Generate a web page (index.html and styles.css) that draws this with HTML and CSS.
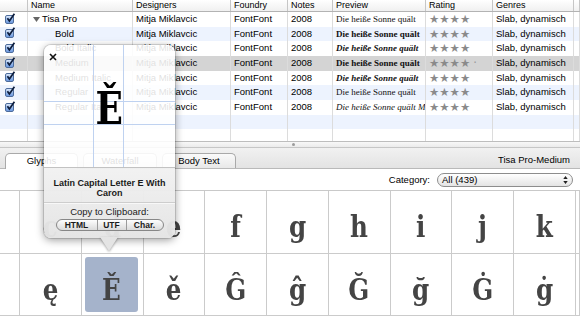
FILE: index.html
```html
<!DOCTYPE html>
<html lang="de">
<head>
  <meta charset="UTF-8">
  <title>Font Book - Tisa Pro</title>
  <link rel="stylesheet" href="styles.css">
</head>
<body>
<div class="window">

  <div class="font-table">
    <div class="row head">
      <div></div><div>Name</div><div>Designers</div><div>Foundry</div><div>Notes</div><div>Preview</div><div>Rating</div><div>Genres</div><div></div>
    </div>
    <div class="row">
      <div class="chk"><span class="check"><svg viewBox="0 0 11 11"><path d="M2.4 5.2 L4.4 8 L9.4 0.8"/></svg></span></div>
      <div class="name family"><svg class="disclosure" viewBox="0 0 7 5"><path d="M0 0 H7 L3.5 5 Z"/></svg>Tisa Pro</div>
      <div>Mitja Miklavcic</div><div>FontFont</div><div>2008</div>
      <div class="preview">Die heiße Sonne quält</div>
      <div class="stars">★★★★</div>
      <div>Slab, dynamisch</div><div></div>
    </div>
    <div class="row alt">
      <div class="chk"><span class="check"><svg viewBox="0 0 11 11"><path d="M2.4 5.2 L4.4 8 L9.4 0.8"/></svg></span></div>
      <div class="name">Bold</div>
      <div>Mitja Miklavcic</div><div>FontFont</div><div>2008</div>
      <div class="preview bold">Die heiße Sonne quält</div>
      <div class="stars">★★★★</div>
      <div>Slab, dynamisch</div><div></div>
    </div>
    <div class="row">
      <div class="chk"><span class="check"><svg viewBox="0 0 11 11"><path d="M2.4 5.2 L4.4 8 L9.4 0.8"/></svg></span></div>
      <div class="name">Bold Italic</div>
      <div>Mitja Miklavcic</div><div>FontFont</div><div>2008</div>
      <div class="preview bold italic">Die heiße Sonne quält</div>
      <div class="stars">★★★★</div>
      <div>Slab, dynamisch</div><div></div>
    </div>
    <div class="row sel">
      <div class="chk"><span class="check"><svg viewBox="0 0 11 11"><path d="M2.4 5.2 L4.4 8 L9.4 0.8"/></svg></span></div>
      <div class="name">Medium</div>
      <div>Mitja Miklavcic</div><div>FontFont</div><div>2008</div>
      <div class="preview bold">Die heiße Sonne quält</div>
      <div class="stars">★★★★<span class="empty-star">·</span></div>
      <div>Slab, dynamisch</div><div></div>
    </div>
    <div class="row">
      <div class="chk"><span class="check"><svg viewBox="0 0 11 11"><path d="M2.4 5.2 L4.4 8 L9.4 0.8"/></svg></span></div>
      <div class="name">Medium Italic</div>
      <div>Mitja Miklavcic</div><div>FontFont</div><div>2008</div>
      <div class="preview semibold italic">Die heiße Sonne quält</div>
      <div class="stars">★★★★</div>
      <div>Slab, dynamisch</div><div></div>
    </div>
    <div class="row alt">
      <div class="chk"><span class="check"><svg viewBox="0 0 11 11"><path d="M2.4 5.2 L4.4 8 L9.4 0.8"/></svg></span></div>
      <div class="name">Regular</div>
      <div>Mitja Miklavcic</div><div>FontFont</div><div>2008</div>
      <div class="preview">Die heiße Sonne quält</div>
      <div class="stars">★★★★</div>
      <div>Slab, dynamisch</div><div></div>
    </div>
    <div class="row">
      <div class="chk"><span class="check"><svg viewBox="0 0 11 11"><path d="M2.4 5.2 L4.4 8 L9.4 0.8"/></svg></span></div>
      <div class="name">Regular Italic</div>
      <div>Mitja Miklavcic</div><div>FontFont</div><div>2008</div>
      <div class="preview italic">Die heiße Sonne quält Max</div>
      <div class="stars">★★★★</div>
      <div>Slab, dynamisch</div><div></div>
    </div>
    <div class="row alt">
      <div></div><div></div><div></div><div></div><div></div><div></div><div></div><div></div><div></div>
    </div>
    <div class="row filler">
      <div></div><div></div><div></div><div></div><div></div><div></div><div></div><div></div><div></div>
    </div>
  </div>

  <div class="splitter"><span class="grip"></span></div>

  <div class="tabbar">
    <div class="tabs">
      <div class="tab active">Glyphs</div>
      <div class="tab">Waterfall</div>
      <div class="tab">Body Text</div>
    </div>
    <div class="font-name">Tisa Pro-Medium</div>
  </div>

  <div class="toolbar">
    <label>Category:</label>
    <div class="popup">
      <span>All (439)</span>
      <svg class="updown" viewBox="0 0 5 9"><path d="M2.5 0 L5 3.3 H0 Z M2.5 9 L5 5.7 H0 Z"/></svg>
    </div>
  </div>

  <div class="glyphs">
    <div class="glyph"></div>
    <div class="glyph"><span>c</span></div>
    <div class="glyph"><span>d</span></div>
    <div class="glyph"><span>e</span></div>
    <div class="glyph"><span>f</span></div>
    <div class="glyph"><span>g</span></div>
    <div class="glyph"><span>h</span></div>
    <div class="glyph"><span>i</span></div>
    <div class="glyph"><span>j</span></div>
    <div class="glyph"><span>k</span></div>
    <div class="glyph"></div>

    <div class="glyph"></div>
    <div class="glyph"><span>ę</span></div>
    <div class="glyph sel"><div class="pick"><span>Ě</span></div></div>
    <div class="glyph"><span>ě</span></div>
    <div class="glyph"><span>Ĝ</span></div>
    <div class="glyph"><span>ĝ</span></div>
    <div class="glyph"><span>Ğ</span></div>
    <div class="glyph"><span>ğ</span></div>
    <div class="glyph"><span>Ġ</span></div>
    <div class="glyph"><span>ġ</span></div>
    <div class="glyph"></div>
  </div>

  <div class="popover">
    <div class="glyph-view">
      <span class="guide-v left"></span>
      <span class="guide-v right"></span>
      <span class="guide-h xheight"></span>
      <span class="guide-h baseline"></span>
      <svg class="close" viewBox="0 0 8 8"><path d="M1 1 L7 7 M7 1 L1 7"/></svg>
      <span class="big-glyph">Ě</span>
    </div>
    <div class="glyph-info">
      <div class="glyph-title">Latin Capital Letter E With Caron</div>
      <div class="copy-label">Copy to Clipboard:</div>
      <div class="segmented">
        <span class="seg-html">HTML</span><span class="seg-utf">UTF</span><span class="seg-char">Char.</span>
      </div>
    </div>
    <svg class="popover-tip" viewBox="0 0 18 15"><path d="M0 0 H18 L9 14 Z"/></svg>
  </div>

</div>
</body>
</html>
```

FILE: styles.css
```css
* { box-sizing: border-box; }
body {
  margin: 0;
  font-family: "Liberation Sans", Arial, sans-serif;
  font-size: 9.5px;
  color: #000;
  background: #fff;
}
.window {
  position: relative;
  width: 580px;
  height: 316px;
  overflow: hidden;
  display: flex;
  flex-direction: column;
}

/* font list */
.font-table {
  height: 141px;
  display: flex;
  flex-direction: column;
  flex-shrink: 0;
}
.row {
  display: grid;
  grid-template-columns: 28px 105px 98px 57px 45px 93px 67px 81px 1fr;
  height: 14.67px;
  line-height: 14.67px;
  flex-shrink: 0;
}
.row > div {
  border-right: 1px solid #dcdcdc;
  padding-left: 3px;
  white-space: nowrap;
  overflow: hidden;
}
.row.head {
  height: 12px;
  line-height: 11px;
  font-size: 9px;
  background: linear-gradient(#fff, #f0f0f0);
  border-bottom: 1px solid #b3b3b3;
}
.row.head > div { border-right-color: #c6c6c6; }
.row.alt { background: #edf3fe; }
.row.sel { background: #d4d4d4; }
.row.filler { flex: 1; }

.row .chk {
  padding-left: 5px;
  display: flex;
  align-items: center;
  overflow: visible;
}
.check {
  position: relative;
  width: 9px;
  height: 9px;
  border: 1px solid #4d6c9c;
  border-radius: 2px;
  background: linear-gradient(#dce8fa, #8db2e8 60%, #6f9ae0);
}
.check svg {
  position: absolute;
  left: -1px;
  top: -3px;
  width: 11px;
  height: 11px;
  fill: none;
  stroke: #0d1d3c;
  stroke-width: 1.7;
}
.row .name { padding-left: 27px; }
.row .name.family {
  padding-left: 5px;
  display: flex;
  align-items: center;
}
.disclosure {
  width: 7px;
  height: 5px;
  margin-right: 2px;
  fill: #666;
}
.preview {
  font-family: "Liberation Serif", "Times New Roman", serif;
  font-size: 9px;
  color: #111;
}
.preview.bold { font-weight: bold; }
.preview.semibold { font-weight: 600; }
.preview.italic { font-style: italic; }
.stars {
  font-family: "DejaVu Sans", sans-serif;
  font-size: 11.5px;
  color: #8a8a8a;
}
.empty-star {
  margin-left: 3px;
  color: #9a9a9a;
}

/* splitter */
.splitter {
  height: 7px;
  flex-shrink: 0;
  border-top: 1px solid #bdbdbd;
  border-bottom: 1px solid #c6c6c6;
  background: linear-gradient(#f8f8f8, #ebebeb);
  display: flex;
  justify-content: center;
  align-items: center;
  padding-left: 6px;
}
.grip {
  width: 3px;
  height: 3px;
  border-radius: 50%;
  background: #9c9c9c;
}

/* tabs */
.tabbar {
  height: 21px;
  flex-shrink: 0;
  display: flex;
  justify-content: space-between;
  align-items: flex-end;
  padding: 0 10px 0 5px;
  background: linear-gradient(#f1f1f1, #e3e3e3);
  border-bottom: 1px solid #b9b9b9;
}
.tabs {
  display: flex;
  gap: 5px;
}
.tab {
  width: 74px;
  height: 15px;
  margin-bottom: -1px;
  border: 1px solid #a9a9a9;
  border-bottom: none;
  border-radius: 5px 5px 0 0;
  background: linear-gradient(#fafafa, #e8e8e8);
  text-align: center;
  line-height: 14px;
}
.tab.active {
  width: 73px;
  height: 16px;
  background: #fff;
}
.font-name {
  align-self: center;
  padding-top: 3px;
}

/* category bar */
.toolbar {
  height: 22px;
  flex-shrink: 0;
  display: flex;
  justify-content: flex-end;
  align-items: center;
  padding-right: 7px;
  border-bottom: 1px solid #c9c9c9;
}
.toolbar label { margin-right: 7px; }
.popup {
  width: 136px;
  height: 14px;
  border: 1px solid #8d8d8d;
  border-radius: 7px;
  background: linear-gradient(#fff, #e4e4e4);
  display: flex;
  justify-content: space-between;
  align-items: center;
  padding: 0 4px;
  line-height: 12px;
}
.updown {
  width: 5px;
  height: 8px;
  fill: #222;
}

/* glyph grid */
.glyphs {
  display: grid;
  grid-template-columns: 20px repeat(9, 61.78px) 1fr;
  grid-template-rows: 63px 62px;
}
.glyph {
  border-right: 1px solid #cbcbcb;
  border-bottom: 1px solid #cbcbcb;
  display: flex;
  justify-content: center;
  padding-top: 21px;
  font-family: "DejaVu Serif", serif;
  font-weight: bold;
  font-size: 30px;
  line-height: 30px;
  color: #444;
}
.glyph span {
  display: inline-block;
  transform: scaleX(0.82);
}
.glyph.sel { padding: 3px 5px 3px 3px; }
.pick {
  flex: 1;
  border-radius: 3px;
  background: #a5b3cb;
  text-align: center;
  padding-top: 18px;
}

/* glyph popover */
.popover {
  position: absolute;
  left: 44px;
  top: 45px;
  width: 131px;
  height: 193px;
  border-radius: 7px;
  box-shadow: 0 2px 9px rgba(0,0,0,0.4), 0 0 0 1px rgba(0,0,0,0.12);
  display: flex;
  flex-direction: column;
  z-index: 5;
}
.glyph-view {
  position: relative;
  height: 122px;
  flex-shrink: 0;
  background: rgba(255,255,255,0.88);
  border-radius: 7px 7px 0 0;
  display: flex;
  justify-content: center;
  padding-top: 41px;
}
.guide-v, .guide-h {
  position: absolute;
  background: #bfd2f0;
}
.guide-v { top: 0; bottom: 0; width: 1px; }
.guide-v.left { left: 49px; }
.guide-v.right { left: 79px; }
.guide-h { left: 0; right: 0; height: 1px; }
.guide-h.xheight { top: 56px; }
.guide-h.baseline { top: 79px; }
.close {
  position: absolute;
  left: 5px;
  top: 8px;
  width: 8px;
  height: 8px;
  fill: none;
  stroke: #111;
  stroke-width: 1.6;
}
.big-glyph {
  position: relative;
  height: 45px;
  font-family: "DejaVu Serif", serif;
  font-weight: bold;
  font-size: 45px;
  line-height: 45px;
  color: #000;
  transform: scaleX(0.8);
}
.glyph-info {
  flex: 1;
  background: linear-gradient(rgba(241,241,241,0.96), rgba(228,228,228,0.97));
  border-top: 1px solid #c2c2c2;
  border-radius: 0 0 7px 7px;
  text-align: center;
  color: #1a1a1a;
}
.glyph-title {
  font-weight: bold;
  font-size: 9px;
  line-height: 10px;
  padding: 10px 6px 4px;
  border-bottom: 1px solid #cdcdcd;
  box-shadow: 0 1px 0 #f8f8f8;
}
.copy-label {
  margin-top: 4px;
  line-height: 10px;
}
.segmented {
  display: inline-flex;
  margin-top: 2px;
  height: 12px;
  border: 1px solid #878787;
  border-radius: 6px;
  background: linear-gradient(#fdfdfd, #dadada);
  font-weight: bold;
  font-size: 8.5px;
  line-height: 10px;
  overflow: hidden;
}
.segmented span { border-left: 1px solid #9a9a9a; }
.segmented .seg-html { width: 40px; border-left: none; }
.segmented .seg-utf { width: 29px; }
.segmented .seg-char { width: 37px; }
.popover-tip {
  position: absolute;
  left: 56px;
  top: 192px;
  width: 18px;
  height: 15px;
  fill: #e4e4e4;
  filter: drop-shadow(0 1px 1px rgba(0,0,0,0.35));
}
```
